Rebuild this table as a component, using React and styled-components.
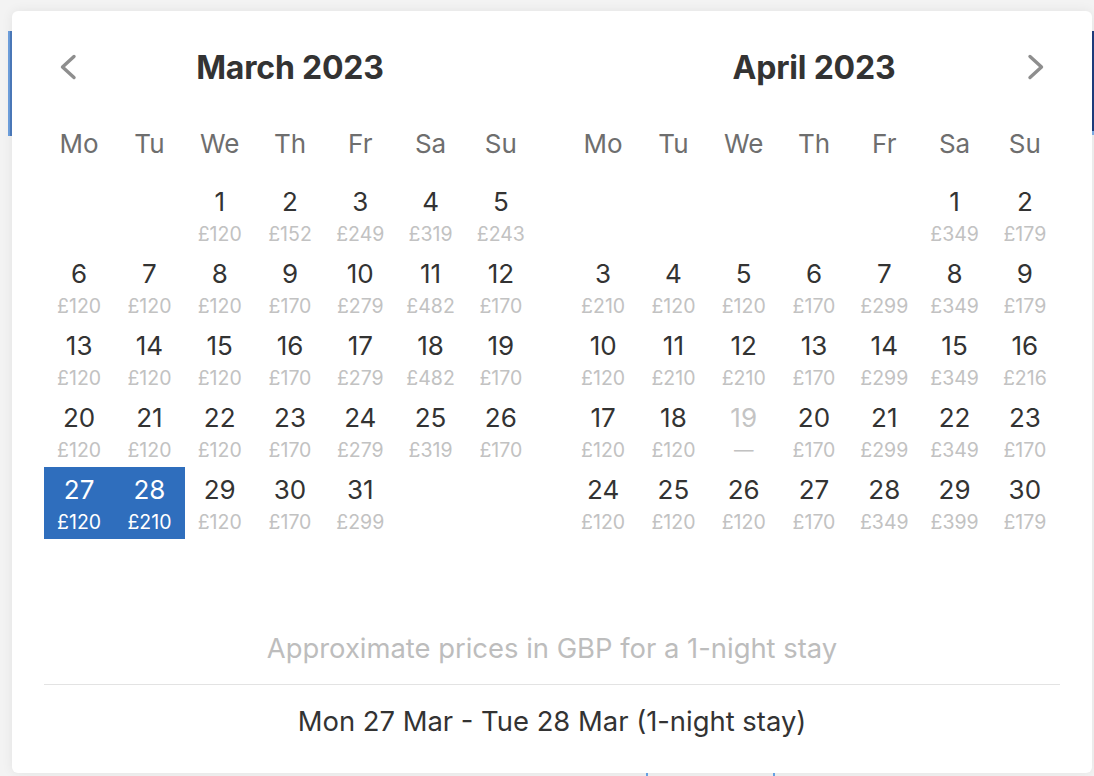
import React from 'react'
import styled, { createGlobalStyle } from 'styled-components'

const GlobalStyle = createGlobalStyle`
  html, body {
    margin: 0;
    background: #f3f3f3;
  }
  body {
    font-family: Inter, "Noto Sans", "Liberation Sans", sans-serif;
    -webkit-font-smoothing: antialiased;
  }
`

const WEEKDAYS = ['Mo', 'Tu', 'We', 'Th', 'Fr', 'Sa', 'Su']

const MONTHS = [
    {
        title: 'March 2023',
        offset: 2,
        prices: [120, 152, 249, 319, 243,
            120, 120, 120, 170, 279, 482, 170,
            120, 120, 120, 170, 279, 482, 170,
            120, 120, 120, 170, 279, 319, 170,
            120, 210, 120, 170, 299],
        selected: [27, 28],
        nav: 'prev',
    },
    {
        title: 'April 2023',
        offset: 5,
        prices: [349, 179,
            210, 120, 120, 170, 299, 349, 179,
            120, 210, 210, 170, 299, 349, 216,
            120, 120, null, 170, 299, 349, 170,
            120, 120, 120, 170, 349, 399, 179],
        selected: [],
        nav: 'next',
    },
]

const Chevron = ({ dir }) => (
    <svg width="18" height="26" viewBox="0 0 18 26">
        <polyline
            points={dir === 'prev' ? '15,2.5 3.5,13 15,23.5' : '3,2.5 14.5,13 3,23.5'}
            fill="none"
            stroke="#8e8e8e"
            strokeWidth="3.4"
            strokeLinecap="round"
            strokeLinejoin="round"
        />
    </svg>
)

const Month = ({ month }) => {
    const blanks = Array.from({ length: month.offset })
    return (
        <MonthBox>
            <Header>
                <NavSlot>{month.nav === 'prev' && <NavButton><Chevron dir="prev" /></NavButton>}</NavSlot>
                <Title>{month.title}</Title>
                <NavSlot>{month.nav === 'next' && <NavButton><Chevron dir="next" /></NavButton>}</NavSlot>
            </Header>
            <WeekRow>
                {WEEKDAYS.map(d => <WeekDay key={d}>{d}</WeekDay>)}
            </WeekRow>
            <DaysGrid>
                {blanks.map((_, i) => <Cell key={'b' + i} />)}
                {month.prices.map((price, i) => {
                    const day = i + 1
                    const selected = month.selected.includes(day)
                    const disabled = price === null
                    return (
                        <Cell key={day} $selected={selected}>
                            <DayNum $selected={selected} $disabled={disabled}>{day}</DayNum>
                            <Price $selected={selected}>{disabled ? '—' : '£' + price}</Price>
                        </Cell>
                    )
                })}
            </DaysGrid>
        </MonthBox>
    )
}

const App = () => {
    return (
        <Page>
            <GlobalStyle />
            <FieldEdge />
            <ButtonEdge />
            <Tick $left={646} />
            <Tick $left={773} />
            <Card>
                <Months>
                    {MONTHS.map(m => <Month key={m.title} month={m} />)}
                </Months>
                <Footer>
                    <Note>Approximate prices in GBP for a 1-night stay</Note>
                    <Divider />
                    <Summary>Mon 27 Mar - Tue 28 Mar (1-night stay)</Summary>
                </Footer>
            </Card>
        </Page>
    )
}

const Page = styled.div`
    position: relative;
    width: 1094px;
    height: 776px;
    box-sizing: border-box;
    padding: 11px 2px 3px 12px;
    overflow: hidden;
    background: #f3f3f3;
`
const FieldEdge = styled.div`
    position: absolute;
    left: 8px;
    top: 31px;
    width: 4px;
    height: 105px;
    background: linear-gradient(to right, #6ea0de 0, #6ea0de 50%, #4d7bbd 50%);
`
const ButtonEdge = styled.div`
    position: absolute;
    left: 1092px;
    top: 31px;
    width: 2px;
    height: 104px;
    background: linear-gradient(to bottom, #1e3d7e 0, #1e3d7e 96%, #7fb0ea 96%);
`
const Tick = styled.div`
    position: absolute;
    left: ${p => p.$left}px;
    top: 773px;
    width: 2px;
    height: 3px;
    background: #6aa6ea;
`
const Card = styled.div`
    position: relative;
    z-index: 1;
    height: 762px;
    box-sizing: border-box;
    padding: 0 32px;
    display: flex;
    flex-direction: column;
    background: #fff;
    border-radius: 6px;
    box-shadow: 0 0 12px rgba(0, 0, 0, 0.07);
`
const Months = styled.div`
    display: grid;
    grid-template-columns: 1fr 1fr;
    column-gap: 32px;
`
const MonthBox = styled.div`
    display: flex;
    flex-direction: column;
`
const Header = styled.div`
    display: grid;
    grid-template-columns: 48px 1fr 48px;
    align-items: center;
    height: 48px;
    margin-top: 32px;
`
const NavSlot = styled.div`
    display: flex;
    justify-content: center;
    align-items: center;
`
const NavButton = styled.button`
    display: flex;
    padding: 0;
    border: 0;
    background: none;
    cursor: pointer;
`
const Title = styled.h2`
    margin: 0;
    text-align: center;
    font-size: 32px;
    font-weight: 700;
    color: #333;
    letter-spacing: -0.2px;
`
const WeekRow = styled.div`
    display: grid;
    grid-template-columns: repeat(7, 1fr);
    height: 40px;
    margin-top: 32px;
    align-items: center;
`
const WeekDay = styled.div`
    text-align: center;
    font-size: 26px;
    color: #6e6e6e;
`
const DaysGrid = styled.div`
    display: grid;
    grid-template-columns: repeat(7, 1fr);
    grid-auto-rows: 72px;
    margin-top: 16px;
`
const Cell = styled.div`
    display: flex;
    flex-direction: column;
    align-items: center;
    padding-top: 8px;
    box-sizing: border-box;
    background: ${p => (p.$selected ? '#2f6ebd' : 'transparent')};
`
const DayNum = styled.div`
    line-height: 30px;
    font-size: 26px;
    color: ${p => (p.$selected ? '#fff' : p.$disabled ? '#c4c4c4' : '#333')};
`
const Price = styled.div`
    margin-top: 5px;
    line-height: 24px;
    font-size: 19.5px;
    color: ${p => (p.$selected ? '#fff' : '#c2c2c2')};
`
const Footer = styled.div`
    margin-top: auto;
    padding-bottom: 36px;
    display: flex;
    flex-direction: column;
`
const Note = styled.div`
    line-height: 32px;
    text-align: center;
    font-size: 27.4px;
    color: #bdbdbd;
`
const Divider = styled.div`
    height: 1px;
    margin-top: 20px;
    background: #e3e3e3;
`
const Summary = styled.div`
    margin-top: 20px;
    line-height: 32px;
    text-align: center;
    font-size: 27.4px;
    color: #333;
`

export default App
